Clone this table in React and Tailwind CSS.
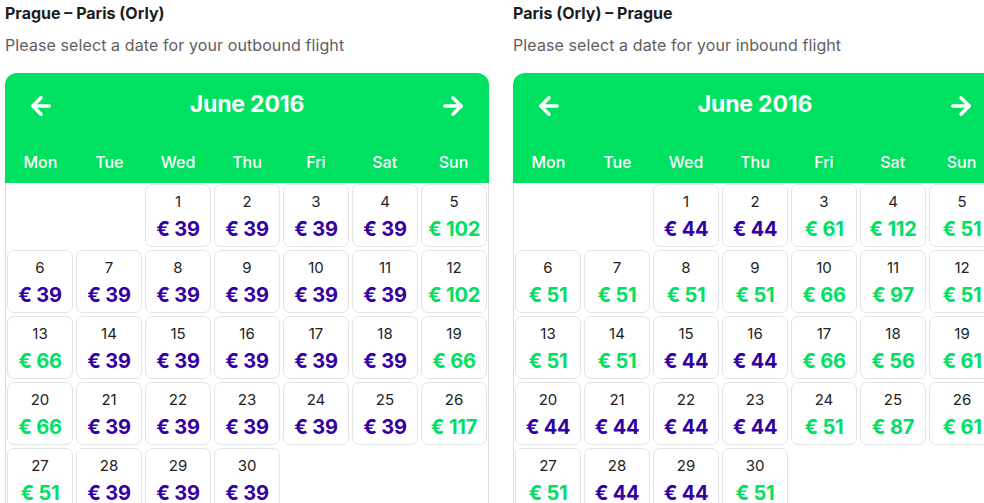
import { ArrowLeft, ArrowRight } from 'lucide-react'

const DAYS = ['Mon', 'Tue', 'Wed', 'Thu', 'Fri', 'Sat', 'Sun']

// price per day of June 2016, "g" = green, "p" = lowest (purple)
const OUTBOUND = [
  [39, 'p'], [39, 'p'], [39, 'p'], [39, 'p'], [102, 'g'],
  [39, 'p'], [39, 'p'], [39, 'p'], [39, 'p'], [39, 'p'], [39, 'p'], [102, 'g'],
  [66, 'g'], [39, 'p'], [39, 'p'], [39, 'p'], [39, 'p'], [39, 'p'], [66, 'g'],
  [66, 'g'], [39, 'p'], [39, 'p'], [39, 'p'], [39, 'p'], [39, 'p'], [117, 'g'],
  [51, 'g'], [39, 'p'], [39, 'p'], [39, 'p'],
]

const INBOUND = [
  [44, 'p'], [44, 'p'], [61, 'g'], [112, 'g'], [51, 'g'],
  [51, 'g'], [51, 'g'], [51, 'g'], [51, 'g'], [66, 'g'], [97, 'g'], [51, 'g'],
  [51, 'g'], [51, 'g'], [44, 'p'], [44, 'p'], [66, 'g'], [56, 'g'], [61, 'g'],
  [44, 'p'], [44, 'p'], [44, 'p'], [44, 'p'], [51, 'g'], [87, 'g'], [61, 'g'],
  [51, 'g'], [44, 'p'], [44, 'p'], [51, 'g'],
]

function Calendar({ title, subtitle, prices }) {
  return (
    <div className="w-[484px] shrink-0">
      <h2 className="h-[27px] pt-[4px] text-[16px] font-bold leading-[18px] text-[#1d1d1d]">{title}</h2>
      <p className="h-[46px] pt-[8px] text-[16px] leading-[20px] tracking-[0.1px] text-[#606060]">{subtitle}</p>

      <div className="rounded-t-[12px] bg-[#00e162] text-white">
        <div className="flex h-[64px] items-center justify-between px-[22px] pt-[2px]">
          <ArrowLeft className="h-[28px] w-[28px]" strokeWidth={3} />
          <span className="-mt-[4px] text-[23px] font-bold tracking-[-0.2px]">June 2016</span>
          <ArrowRight className="h-[28px] w-[28px]" strokeWidth={3} />
        </div>
        <div className="grid h-[46px] grid-cols-7 items-center px-[1px] pt-[4px] text-[16px] font-medium">
          {DAYS.map((d) => (
            <span key={d} className="text-center">{d}</span>
          ))}
        </div>
      </div>

      <div className="grid grid-cols-7 gap-[3px] border-x border-[#dcdcdc] px-[1px] pt-[1px]">
        <div className="col-span-2" />
        {prices.map(([price, tone], i) => (
          <div
            key={i}
            className="flex h-[63px] flex-col items-center rounded-[7px] border border-[#e4e4e4] bg-white pt-[8px]"
          >
            <span className="text-[15px] leading-[18px] text-[#222]">{i + 1}</span>
            <span
              className={`mt-[5px] text-[20px] font-bold leading-[26px] tracking-[-0.2px] ${
                tone === 'p' ? 'text-[#3400a3]' : 'text-[#00e162]'
              }`}
            >
              € {price}
            </span>
          </div>
        ))}
      </div>
    </div>
  )
}

export default function App() {
  return (
    <div className="h-[503px] w-[984px] overflow-hidden bg-white font-['Inter','Liberation_Sans',sans-serif]">
      <div className="flex gap-[24px] pl-[5px]">
        <Calendar
          title="Prague – Paris (Orly)"
          subtitle="Please select a date for your outbound flight"
          prices={OUTBOUND}
        />
        <Calendar
          title="Paris (Orly) – Prague"
          subtitle="Please select a date for your inbound flight"
          prices={INBOUND}
        />
      </div>
    </div>
  )
}
